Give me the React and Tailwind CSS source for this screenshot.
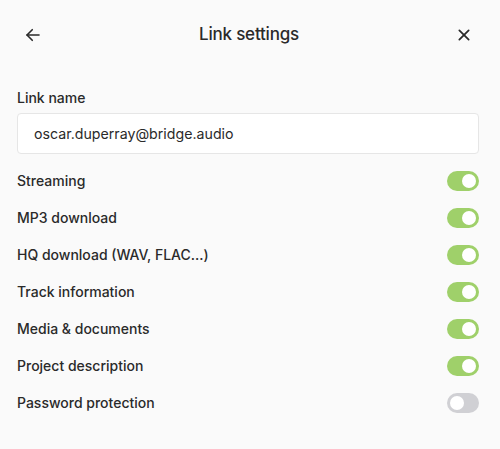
import { useState } from "react";

const OPTIONS = [
  { label: "Streaming", on: true },
  { label: "MP3 download", on: true },
  { label: "HQ download (WAV, FLAC...)", on: true },
  { label: "Track information", on: true },
  { label: "Media & documents", on: true },
  { label: "Project description", on: true },
  { label: "Password protection", on: false },
];

function Toggle({ on, onClick }) {
  return (
    <button
      onClick={onClick}
      className={`flex items-center w-[32px] h-[20px] rounded-full px-[3px] ${
        on ? "bg-[#9fd06a] justify-end" : "bg-[#d0d0d4] justify-start"
      }`}
    >
      <span className="block w-[14px] h-[14px] rounded-full bg-white" />
    </button>
  );
}

export default function App() {
  const [opts, setOpts] = useState(OPTIONS);

  return (
    <div className="w-[500px] h-[449px] bg-[#fafafa] text-[#2a2a2a] font-['Inter',sans-serif]">
      <header className="flex items-center justify-between h-[70px] pl-[24px] pr-[28px]">
        <svg width="18" height="18" viewBox="0 0 24 24" fill="none" stroke="currentColor" strokeWidth="2.2" strokeLinecap="round" strokeLinejoin="round">
          <path d="M20 12H4" />
          <path d="M11 5l-7 7 7 7" />
        </svg>
        <h1 className="text-[17px] font-medium tracking-[-0.2px]">Link settings</h1>
        <svg width="16" height="16" viewBox="0 0 24 24" fill="none" stroke="currentColor" strokeWidth="2.6" strokeLinecap="round">
          <path d="M5 5l14 14" />
          <path d="M19 5L5 19" />
        </svg>
      </header>

      <div className="pl-[17px] pr-[21px]">
        <label className="block text-[14px] font-medium leading-[20px] mt-[18px]">Link name</label>
        <div className="mt-[5px] h-[41px] flex items-center px-[16px] bg-white border border-[#e6e6e6] rounded-[4px] text-[14.2px]">
          oscar.duperray@bridge.audio
        </div>

        <div className="mt-[8px] flex flex-col">
          {opts.map((o, i) => (
            <div key={o.label} className="flex items-center justify-between h-[37px]">
              <span className="text-[14px] font-medium">{o.label}</span>
              <Toggle
                on={o.on}
                onClick={() =>
                  setOpts(opts.map((x, j) => (j === i ? { ...x, on: !x.on } : x)))
                }
              />
            </div>
          ))}
        </div>
      </div>
    </div>
  );
}
